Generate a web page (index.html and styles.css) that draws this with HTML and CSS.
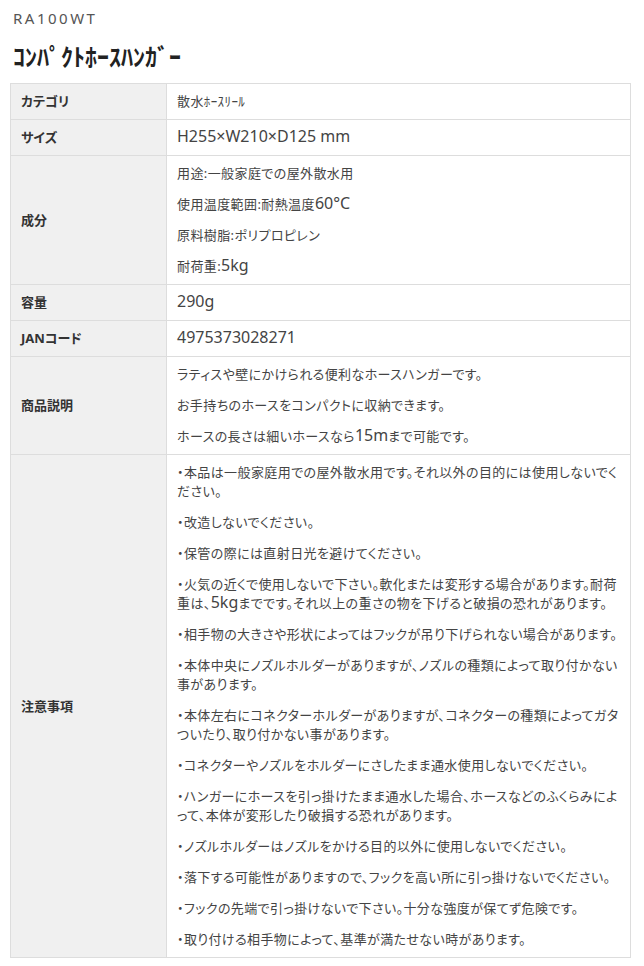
FILE: index.html
```html
<!DOCTYPE html>
<html lang="ja">
<head>
  <meta charset="UTF-8">
  <meta name="viewport" content="width=device-width, initial-scale=1.0">
  <title>RA100WT コンパクトホースハンガー</title>
  <link rel="stylesheet" href="styles.css">
</head>
<body>
  <div class="product">
    <p class="product-code">RA100WT</p>
    <h1 class="product-name">ｺﾝﾊﾟｸﾄﾎｰｽﾊﾝｶﾞｰ</h1>

    <!-- 商品仕様 -->
    <table class="spec">
      <tr>
        <th>カテゴリ</th>
        <td>散水ﾎｰｽﾘｰﾙ</td>
      </tr>
      <tr>
        <th>サイズ</th>
        <td><span class="en">H255×W210×D125 mm</span></td>
      </tr>
      <tr>
        <th>成分</th>
        <td>
          <p>用途:一般家庭での屋外散水用</p>
          <p>使用温度範囲:耐熱温度<span class="en">60°C</span></p>
          <p>原料樹脂:ポリプロピレン</p>
          <p>耐荷重:<span class="en">5kg</span></p>
        </td>
      </tr>
      <tr>
        <th>容量</th>
        <td><span class="en">290g</span></td>
      </tr>
      <tr>
        <th>JANコード</th>
        <td><span class="en">4975373028271</span></td>
      </tr>
      <tr>
        <th>商品説明</th>
        <td>
          <p>ラティスや壁にかけられる便利なホースハンガーです。</p>
          <p>お手持ちのホースをコンパクトに収納できます。</p>
          <p>ホースの長さは細いホースなら<span class="en">15m</span>まで可能です。</p>
        </td>
      </tr>
      <tr>
        <th>注意事項</th>
        <td>
          <p>・本品は一般家庭用での屋外散水用です。それ以外の目的には使用しないでください。</p>
          <p>・改造しないでください。</p>
          <p>・保管の際には直射日光を避けてください。</p>
          <p>・火気の近くで使用しないで下さい。軟化または変形する場合があります。耐荷重は、<span class="en">5kg</span>までです。それ以上の重さの物を下げると破損の恐れがあります。</p>
          <p>・相手物の大きさや形状によってはフックが吊り下げられない場合があります。</p>
          <p>・本体中央にノズルホルダーがありますが、ノズルの種類によって取り付かない事があります。</p>
          <p>・本体左右にコネクターホルダーがありますが、コネクターの種類によってガタついたり、取り付かない事があります。</p>
          <p>・コネクターやノズルをホルダーにさしたまま通水使用しないでください。</p>
          <p>・ハンガーにホースを引っ掛けたまま通水した場合、ホースなどのふくらみによって、本体が変形したり破損する恐れがあります。</p>
          <p>・ノズルホルダーはノズルをかける目的以外に使用しないでください。</p>
          <p>・落下する可能性がありますので、フックを高い所に引っ掛けないでください。</p>
          <p>・フックの先端で引っ掛けないで下さい。十分な強度が保てず危険です。</p>
          <p>・取り付ける相手物によって、基準が満たせない時があります。</p>
        </td>
      </tr>
    </table>
  </div>
</body>
</html>
```

FILE: styles.css
```css
* {
  margin: 0;
  padding: 0;
  box-sizing: border-box;
}

body {
  font-family: "Noto Sans", "Noto Sans CJK JP", sans-serif;
  font-feature-settings: "palt";
  background-color: #fff;
  color: #333;
}

.product {
  width: 621px;
  margin: 0 10px;
}

.product-code {
  font-size: 15px;
  line-height: 20px;
  letter-spacing: 2.5px;
  color: #555;
  padding: 8px 0 0 3px;
}

.product-name {
  font-family: "Noto Sans CJK JP", sans-serif;
  font-size: 24px;
  line-height: 30px;
  font-weight: bold;
  color: #222;
  padding: 13px 0 0 3px;
  margin-bottom: 12px;
}

.spec {
  width: 100%;
  border-collapse: collapse;
  font-size: 13px;
  line-height: 19px;
}

.spec th,
.spec td {
  border: 1px solid #ddd;
  padding: 8px 10px;
  text-align: left;
  vertical-align: middle;
}

.spec th {
  width: 156px;
  background-color: #f0f0f0;
  font-weight: bold;
  color: #333;
}

.spec td {
  color: #444;
  letter-spacing: 0.4px;
}

.spec td p + p {
  margin-top: 12px;
}

/* 英数字は少し大きめ */
.spec .en {
  font-size: 16px;
  line-height: 1;
  letter-spacing: 0;
}
```
